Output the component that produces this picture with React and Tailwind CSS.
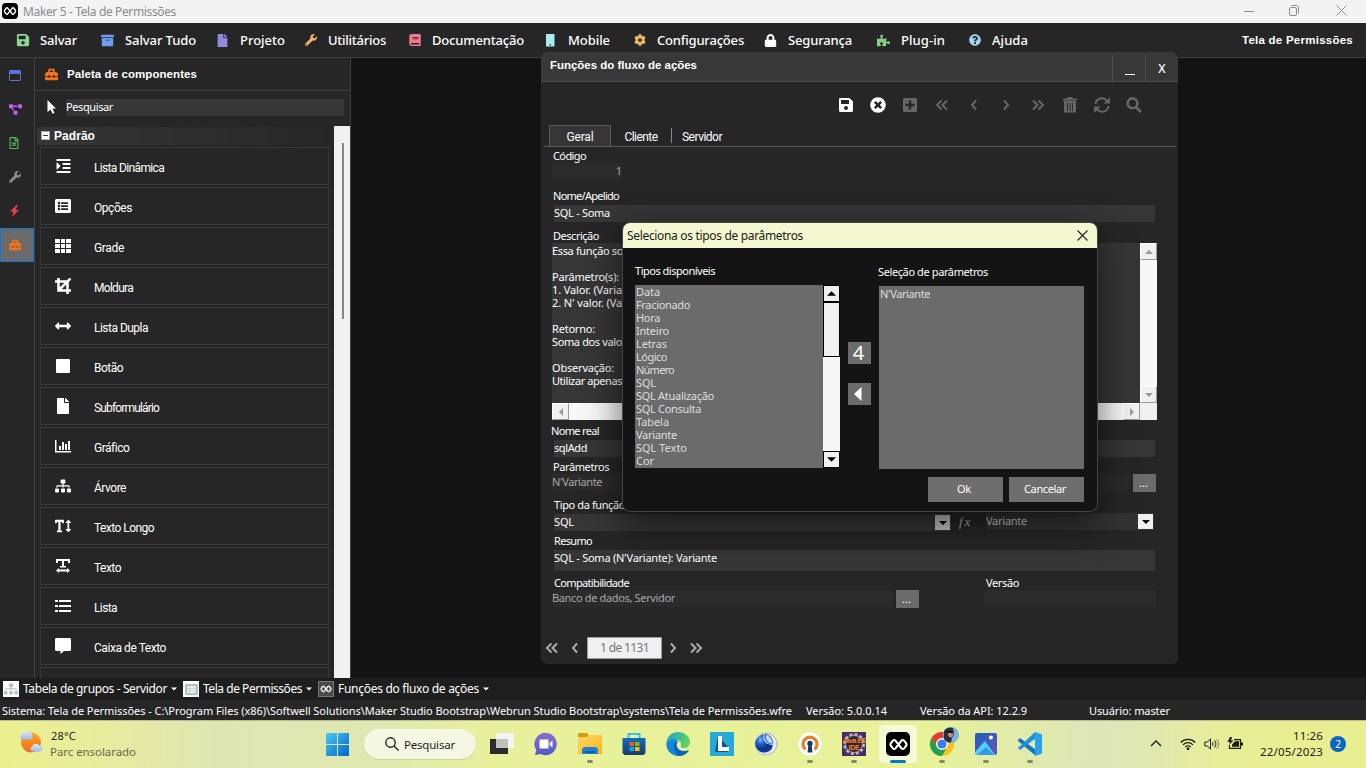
import React, { useLayoutEffect, useRef } from "react";
import {
  FaSave, FaArchive, FaFile, FaWrench, FaBook, FaCog, FaLock, FaPuzzlePiece,
  FaQuestionCircle, FaRegFileAlt, FaBolt, FaToolbox, FaProjectDiagram, FaIndent,
  FaListAlt, FaArrowsAltH, FaSitemap, FaTextHeight,
  FaTimesCircle, FaPlusSquare,
} from "react-icons/fa";

const UI = "font-['Noto_Sans','Open_Sans',sans-serif]";
const SANS = "font-['Liberation_Sans',Arial,sans-serif]";
const THIN = "font-['Roboto','Liberation_Sans',sans-serif]";

/* A single line of text whose tracking is adjusted so that it takes w pixels. */
function T({ w, className = "", children }) {
  const ref = useRef(null);
  useLayoutEffect(() => {
    const el = ref.current;
    if (!w || !el) return;
    el.style.letterSpacing = "0px";
    const natural = el.getBoundingClientRect().width;
    el.style.letterSpacing = (w - natural) / el.textContent.length + "px";
  }, [w, children]);
  return (
    <span ref={ref} className={"inline-block shrink-0 whitespace-pre " + className}>
      {children}
    </span>
  );
}

function Infinity2({ className }) {
  return (
    <svg viewBox="0 0 24 24" className={className} fill="none" stroke="#fff" strokeWidth="2.200" strokeLinejoin="round">
      <path d="M12 12 8.800 8Q7.500 6.500 6.200 8L4 10.700Q3 12 4 13.300L6.200 16Q7.500 17.500 8.800 16L15.200 8Q16.500 6.500 17.800 8L20 10.700Q21 12 20 13.300L17.800 16Q16.500 17.500 15.200 16Z" />
    </svg>
  );
}

function PhoneIcon() {
  return (
    <svg viewBox="0 0 9 13" className="ml-[2px] h-[13px] w-[9px]">
      <path fill="#a8ecec" d="M0 0h8.500v12.500H0z" />
      <path fill="#256" d="M3.500 10h1.500v1.500H3.500z" />
    </svg>
  );
}

const menu = [
  { label: "Salvar", w: 37, box: "w-[85px]", icon: <FaSave className="size-[14px] text-[#8fd694]" /> },
  { label: "Salvar Tudo", w: 71, box: "w-[115px]", icon: <FaArchive className="size-[13px] text-[#6d9ef0]" /> },
  { label: "Projeto", w: 45, box: "w-[88px]", icon: <FaFile className="size-[13px] text-[#8f8ae0]" /> },
  { label: "Utilitários", w: 58, box: "w-[104px]", icon: <FaWrench className="ml-[1px] size-[12px] text-[#f2b568]" /> },
  { label: "Documentação", w: 92, box: "w-[136px]", icon: <FaBook className="ml-[1px] h-[12px] w-[12px] scale-x-110 text-[#f27a8a]" /> },
  { label: "Mobile", w: 42, box: "w-[89px]", icon: <PhoneIcon /> },
  { label: "Configurações", w: 87, box: "w-[131px]", icon: <FaCog className="ml-[1px] size-[12px] text-[#f0b860]" /> },
  { label: "Segurança", w: 64, box: "w-[113px]", icon: <FaLock className="size-[13px] text-white" /> },
  { label: "Plug-in", w: 44, box: "w-[91px]", icon: <FaPuzzlePiece className="size-[13px] text-[#86cf86]" /> },
  { label: "Ajuda", w: 36, box: "w-[80px]", icon: <FaQuestionCircle className="ml-[1px] size-[12px] text-[#a5d5f5]" /> },
];

function GridIcon() {
  return (
    <svg viewBox="0 0 16 14" className="h-[14px] w-4" fill="#fff">
      <path d="M0 0h5v4H0zM6 0h4v4H6zM11 0h5v4h-5zM0 5h5v4H0zM6 5h4v4H6zM11 5h5v4h-5zM0 10h5v4H0zM6 10h4v4H6zM11 10h5v4h-5z" />
    </svg>
  );
}
function ListIcon() {
  return (
    <svg viewBox="0 0 16 12" className="h-3 w-4" fill="#fff">
      <path d="M0 0h3v2H0zM4 0h12v2H4zM0 5h3v2H0zM4 5h12v2H4zM0 10h3v2H0zM4 10h12v2H4z" />
    </svg>
  );
}
function TextWidthIcon() {
  return (
    <svg viewBox="0 0 14 14" className="size-[14px]" fill="#fff">
      <path d="M0 0h14v4h-2V2H8v5h2v1.500H4V7h2V2H2v2H0zM0 11.500 3 9v1.500h8V9l3 2.500-3 2.500v-1.500H3V14z" />
    </svg>
  );
}
function CropIcon() {
  return (
    <svg viewBox="0 0 16 16" className="size-4" fill="none" stroke="#fff" strokeWidth="2.600">
      <path d="M3.500 0v12.500H16M0 3.500h12.500V16M5 11 15.500.5" />
    </svg>
  );
}
function ChartIcon() {
  return (
    <svg viewBox="0 0 16 13" className="h-[13px] w-4" fill="#fff">
      <path d="M0 0h1.500v11H16v1.500H0zM4 6h2v4H4zM7 2h2v8H7zM10 4h2v6h-2zM13 1h2v9h-2z" />
    </svg>
  );
}
function MessageIcon() {
  return (
    <svg viewBox="0 0 16 16" className="size-4" fill="#fff">
      <path d="M1 0h14l1 1v11l-1 1H9l-3.500 3V13H1l-1-1V1z" />
    </svg>
  );
}

const palette = [
  ["Lista Dinâmica", 70, <FaIndent className="h-4 w-[15px]" />],
  ["Opções", 38, <FaListAlt className="size-4" />],
  ["Grade", 30, <GridIcon />],
  ["Moldura", 39, <CropIcon />],
  ["Lista Dupla", 54, <FaArrowsAltH className="size-4" />],
  ["Botão", 29, <span className="size-[14px] rounded-[1px] bg-white" />],
  ["Subformulário", 65, <FaFile className="size-4" />],
  ["Gráfico", 35, <ChartIcon />],
  ["Árvore", 32, <FaSitemap className="size-4" />],
  ["Texto Longo", 60, <FaTextHeight className="size-4" />],
  ["Texto", 27, <TextWidthIcon />],
  ["Lista", 23, <ListIcon />],
  ["Caixa de Texto", 72, <MessageIcon />],
];

function Toolbox({ className }) {
  return <FaToolbox className={"text-[#f97316] " + className} />;
}

function Sidebar() {
  return (
    <div className="flex w-[35px] shrink-0 flex-col border-r border-[#404040]">
      <div className="flex h-[34px] items-center justify-center pt-[1px] pr-1">
        <svg viewBox="0 0 12 11" className="h-[11px] w-3"><path fill="#5873d8" fillRule="evenodd" d="M1 0h10l1 1v9l-1 1H1l-1-1V1zm0 4v6h10V4z" /></svg>
      </div>
      <div className="flex h-[34px] items-center justify-center pr-1"><FaProjectDiagram className="size-[13px] text-[#c85cf5]" /></div>
      <div className="flex h-[34px] items-center justify-center pr-[6px]"><FaRegFileAlt className="size-[12px] text-[#5cb85c]" /></div>
      <div className="flex h-[34px] items-center justify-center pr-1"><FaWrench className="size-[12px] text-[#8c8c8c]" /></div>
      <div className="flex h-[34px] items-center justify-center pr-[6px]">
        <svg viewBox="0 0 9 12" className="h-3 w-[9px]" fill="#ef3e46"><path d="M6.500 0 0 6.500h3.500L2 12l7-7H5.500L8 0z" /></svg>
      </div>
      <div className="flex h-[34px] w-[34px] items-center justify-center border border-[#0a78d6] bg-[#6b6b6b] pr-1">
        <Toolbox className="size-[12px]" />
      </div>
    </div>
  );
}

function Palette() {
  return (
    <div className="flex w-[316px] shrink-0 flex-col border-r border-[#404040]">
      <div className="flex h-[33px] items-center border-b border-[#404040] pl-[10px]">
        <Toolbox className="size-[13px]" />
        <T w={130} className={SANS + " ml-[9px] text-[11.500px] leading-4 font-bold text-white"}>Paleta de componentes</T>
      </div>
      <div className="flex h-[35px] items-start pt-2 pl-[12px]">
        <svg viewBox="0 0 9 14" className="mt-[1px] h-[14px] w-[9px]"><path fill="#fff" d="M.5 0 9 8.500H5.500L7.500 13l-2 .8L3.700 9.500.5 12z" /></svg>
        <div className="ml-[10px] h-[17px] w-[278px] bg-[#363636] text-[11px]">
          <T w={47} className={UI + " leading-4 text-white"}>Pesquisar</T>
        </div>
      </div>
      <div className="flex h-[552px] overflow-hidden">
        <div className="flex w-[299px] shrink-0 flex-col">
          <div className="mt-[1px] ml-[2px] flex h-[18px] shrink-0 items-center rounded-[3px] bg-linear-to-r from-[#363636] to-[#262626] pl-[4px]">
            <span className="mb-[1px] flex size-[9px] items-center justify-center border border-[#aaa] bg-white"><i className="h-px w-[5px] bg-[#2b3f6b]" /></span>
            <T w={41} className={SANS + " ml-[4px] text-[12px] leading-[18px] font-bold text-white"}>Padrão</T>
          </div>
          <div className="mt-[2px] flex flex-col gap-[2px] pl-[5px]">
            {palette.map(([label, w, icon]) => (
              <div key={label} className="flex h-[38px] w-[289px] shrink-0 items-center border border-[#383838] pl-[14px] text-white">
                <span className="flex w-4 items-center justify-center">{icon}</span>
                <T w={w} className={THIN + " mt-[3px] ml-[23px] text-[12px] leading-4"}>{label}</T>
              </div>
            ))}
            <div className="h-[38px] w-[289px] shrink-0 border border-[#383838]" />
          </div>
        </div>
        <div className="flex w-4 justify-center bg-[#f0f0f0] pt-[17px] pl-[2px]">
          <div className="h-[176px] w-[2px] bg-[#858585]" />
        </div>
      </div>
    </div>
  );
}

function Chev({ dir, double, className = "" }) {
  return (
    <svg viewBox="0 0 14 12" className={"h-3 w-[14px] " + className} fill="none" stroke="currentColor" strokeWidth="2">
      <g transform={dir === "r" ? "translate(14 0) scale(-1 1)" : undefined}>
        {double ? <path d="M6.500 1.500 2 6l4.500 4.500M12 1.500 7.500 6l4.500 4.500" /> : <path d="M9 1.500 5 6l4 4.500" />}
      </g>
    </svg>
  );
}

const toolbar = [
  <FaSave className="h-4 w-[16px] text-white" />,
  <FaTimesCircle className="size-[16px] text-white" />,
  <FaPlusSquare className="size-4" />,
  <Chev double />,
  <Chev />,
  <Chev dir="r" />,
  <Chev dir="r" double />,
  <svg viewBox="0 0 14 16" className="h-4 w-[14px]" fill="none" stroke="currentColor">
    <path d="M0 2.500h14M4.500 1h5" strokeWidth="2" />
    <path d="M1 4h12v11.500H1z" fill="currentColor" stroke="none" />
    <path d="M4.500 6v8M7 6v8M9.500 6v8" stroke="#2b2b2b" />
  </svg>,
  <svg viewBox="0 0 16 16" className="size-4" fill="none" stroke="currentColor" strokeWidth="2">
    <path d="M1.500 7a6.300 6.300 0 0 1 11.500-3M14.500 9A6.300 6.300 0 0 1 3 12" />
    <path d="M16 0v6.500H9.500zM0 16V9.500h6.500z" fill="currentColor" stroke="none" />
  </svg>,
  <svg viewBox="0 0 16 16" className="mr-[1px] size-4" fill="none" stroke="currentColor">
    <circle cx="6.500" cy="6.300" r="4.900" strokeWidth="2.600" /><path d="m10 10 5 5" strokeWidth="3" />
  </svg>,
];

function Label({ w, className, children }) {
  return <T w={w} className={"text-white " + className}>{children}</T>;
}

function Tri({ dir = "down", className }) {
  const d = { down: "M0 2h8L4 6z", up: "M0 6h8L4 2z", left: "M6 0v8L2 4z", right: "M2 0v8l4-4z" }[dir];
  return <svg viewBox="0 0 8 8" className={className} fill="currentColor"><path d={d} /></svg>;
}

function ScrollButton({ dir }) {
  return (
    <span className="flex size-[17px] shrink-0 items-center justify-center border border-[#fff] border-r-[#9a9a9a] border-b-[#9a9a9a] bg-[#f0f0f0] text-[#9a9a9a]">
      <Tri dir={dir} className="size-[8px]" />
    </span>
  );
}

const description = [
  ["Essa função so", 71], ["", 0], ["Parâmetro(s):", 67], ["1. Valor. (Varia", 70], ["2. N' valor. (Va", 70],
  ["", 0], ["Retorno:", 43], ["Soma dos valo", 70], ["", 0], ["Observação:", 62], ["Utilizar apenas", 70],
];

function FunctionsWindow() {
  return (
    <div className={UI + " absolute top-[52px] left-[541px] flex h-[612px] w-[637px] flex-col overflow-hidden rounded-[6px] bg-[#262626] text-[11px]"}>
      <div className="flex h-[30px] shrink-0 border-b border-[#4d4d4d] bg-[#383838]">
        <div className="flex-1 pt-[5px] pl-[9px]">
          <T w={147} className={SANS + " text-[11.500px] leading-4 font-bold text-white"}>Funções do fluxo de ações</T>
        </div>
        <div className="mt-[3px] flex w-[33px] justify-center border-l border-[#4d4d4d] pl-[2px]"><span className="mt-[19px] h-px w-[10px] bg-white" /></div>
        <div className="mt-[3px] w-[33px] border-l border-[#4d4d4d] pt-[6px] text-center text-[12px] leading-4 font-medium text-white">X</div>
      </div>
      <div className="flex h-[43px] shrink-0 items-center pt-[3px] pl-[289px] text-[#666]">
        {toolbar.map((icon, i) => <span key={i} className="flex w-8 items-center justify-center">{icon}</span>)}
      </div>
      <div className={THIN + " mr-[2px] ml-[3px] flex h-[22px] shrink-0 border-b border-[#5a5a5a] pl-[5px] text-[12px] text-white"}>
        <div className="flex w-[62px] justify-center border border-b-0 border-[#5a5a5a] bg-[#363636]"><T w={27} className="leading-[23px]">Geral</T></div>
        <div className="my-[3px] flex w-[61px] justify-center border-r border-[#8a8a8a]"><T w={33} className="mt-[-2px] leading-[23px]">Cliente</T></div>
        <T w={40} className="ml-[10px] leading-[25px]">Servidor</T>
      </div>

      <div className="flex flex-col items-start pl-[11px]">
        <Label w={33} className="ml-[1px] h-[16px] leading-[18px]">Código</Label>
        <div className="h-[17px] w-[70px] bg-[#2b2b2b] text-right leading-[16px] text-[#a8a8a8]">1</div>

        <Label w={66} className="mt-[8px] ml-[1px] h-[17px] leading-[16px]">Nome/Apelido</Label>
        <div className="ml-[2px] h-[17px] w-[601px] bg-[#363636]"><T w={56} className="leading-[16px] text-white">SQL - Soma</T></div>

        <Label w={46} className="mt-[5px] ml-[1px] h-[16px] leading-[18px]">Descrição</Label>
        <div className="flex">
          <div className="flex h-[160px] w-[588px] flex-col items-start overflow-hidden bg-[#363636] pt-[1px] text-white">
            {description.map(([line, w], i) => <div key={i} className="flex h-[13px] shrink-0"><T w={w} className="leading-[13px]">{line}</T></div>)}
          </div>
          <div className="flex w-[17px] flex-col justify-between bg-[#f7f7f7]"><ScrollButton dir="up" /><ScrollButton dir="down" /></div>
        </div>
        <div className="flex h-[17px] w-[605px] bg-[#f0f0f0]">
          <div className="flex w-[588px] justify-between bg-[#f7f7f7]"><ScrollButton dir="left" /><ScrollButton dir="right" /></div>
        </div>

        <Label w={48} className="mt-[3px] ml-[-1px] h-[17px] leading-[16px]">Nome real</Label>
        <div className="ml-[2px] h-[17px] w-[601px] bg-[#363636]"><T w={33} className="leading-[16px] text-white">sqlAdd</T></div>

        <Label w={56} className="ml-[1px] h-[17px] leading-[20px]">Parâmetros</Label>
        <div className="flex h-[18px]">
          <div className="h-[17px] w-[577px] bg-[#2b2b2b]"><T w={50} className="leading-[16px] text-[#a8a8a8]">N'Variante</T></div>
          <div className="ml-[4px] h-[18px] w-[23px] bg-[#6b6b6b] pr-[2px] text-center leading-[17px] text-white">...</div>
        </div>

        <Label w={71} className="ml-[2px] h-[21px] leading-[26px]">Tipo da função</Label>
        <div className="flex h-[18px]">
          <div className="mt-[1px] ml-[2px] flex h-[17px] w-[397px] justify-between bg-[#363636]">
            <T w={20} className="leading-[16px] text-white">SQL</T>
            <span className="mt-[1px] mr-[1px] flex h-[15px] w-[15px] items-center justify-center bg-[#c4c4c4] text-black"><Tri className="size-[8px]" /></span>
          </div>
          <span className="ml-[8px] flex w-[14px] font-['Liberation_Serif',serif] text-[13px] leading-[17px] text-[#aaa] italic"><T w={13}>fx</T></span>
          <div className="ml-[13px] flex h-[17px] w-[168px] justify-between bg-[#333]">
            <T w={41} className="leading-[16px] text-[#c8c8c8]">Variante</T>
            <span className="mt-[1px] mr-[1px] flex h-[15px] w-[15px] items-center justify-center bg-[#f0f0f0] text-black"><Tri className="size-[8px]" /></span>
          </div>
        </div>

        <Label w={38} className="ml-[2px] h-[19px] leading-[20px]">Resumo</Label>
        <div className="ml-[2px] h-[21px] w-[601px] bg-[#363636]"><T w={163} className="leading-[16px] text-white">SQL - Soma (N'Variante): Variante</T></div>

        <div className="flex h-[19px]">
          <Label w={75} className="ml-[2px] leading-[24px]">Compatibilidade</Label>
          <Label w={33} className="ml-[357px] leading-[24px]">Versão</Label>
        </div>
        <div className="flex h-[18px]">
          <div className="h-[17px] w-[341px] bg-[#2b2b2b]"><T w={123} className="leading-[16px] text-[#a8a8a8]">Banco de dados, Servidor</T></div>
          <div className="ml-[3px] h-[18px] w-[23px] bg-[#6b6b6b] pr-[2px] text-center leading-[17px] text-white">...</div>
          <div className="ml-[65px] h-[17px] w-[172px] bg-[#2b2b2b]" />
        </div>
      </div>

      <div className="mt-[29px] flex h-[22px] items-center pl-1 text-[#aaa]">
        <Chev double />
        <Chev className="ml-[9px]" />
        <div className="ml-[5px] flex h-[22px] w-[75px] justify-center border border-[#9a9a9a] bg-[#f0f0f0]"><T w={49} className="text-[12px] leading-[20px] text-[#777]">1 de 1131</T></div>
        <Chev dir="r" className="ml-[4px]" />
        <Chev dir="r" double className="ml-[9px]" />
      </div>
    </div>
  );
}

const types = [
  ["Data", 24], ["Fracionado", 54], ["Hora", 24], ["Inteiro", 33], ["Letras", 31], ["Lógico", 31], ["Número", 38], ["SQL", 20],
  ["SQL Atualização", 78], ["SQL Consulta", 65], ["Tabela", 33], ["Variante", 41], ["SQL Texto", 51], ["Cor", 18],
];

function ParamDialog() {
  return (
    <div className={UI + " absolute top-[222px] left-[622px] flex h-[290px] w-[476px] flex-col overflow-hidden rounded-[8px] border border-[#444] bg-[#141414] text-[11px] text-white shadow-[0_12px_36px_rgba(0,0,0,0.6)]"}>
      <div className="flex h-[25px] shrink-0 items-center justify-between bg-[#f3f8d0] pr-[9px] pl-[4px]">
        <T w={176} className="text-[12px] leading-[26px] text-[#1b1b1b]">Seleciona os tipos de parâmetros</T>
        <svg viewBox="0 0 11 11" className="size-[11px]" stroke="#222" strokeWidth="1.100"><path d="M.5.500 10.500 10.500M10.500.5.500 10.500" /></svg>
      </div>
      <div className="flex pl-[12px]">
        <div className="w-[205px]">
          <Label w={80} className="h-[37px] pt-[15px] leading-[16px]">Tipos disponíveis</Label>
          <div className="flex h-[183px]">
            <div className="flex w-[188px] flex-col items-start overflow-hidden bg-[#6b6b6b] pl-[1px] text-[#dedede]">
              {types.map(([t, w]) => <div key={t} className="flex h-[13px] shrink-0"><T w={w} className="leading-[13px]">{t}</T></div>)}
            </div>
            <div className="flex w-[17px] flex-col bg-[#f7f7f7] text-black">
              <span className="flex h-[17px] items-center justify-center border border-black bg-[#f0f0f0]"><Tri dir="up" className="size-[9px]" /></span>
              <span className="h-[55px] border border-black bg-[#f0f0f0]" />
              <span className="mt-auto flex h-[17px] items-center justify-center border border-black bg-[#f0f0f0]"><Tri className="size-[9px]" /></span>
            </div>
          </div>
        </div>
        <div className="ml-[8px] flex w-[23px] flex-col pt-[94px]">
          <span className="flex h-[22px] items-center justify-center bg-[#6b6b6b] pr-[2px] text-[20px] leading-none">4</span>
          <span className="mt-[19px] flex h-[22px] items-center justify-center bg-[#6b6b6b] pr-[3px]">
            <svg viewBox="0 0 8 14" className="h-[14px] w-[8px]" fill="#fff"><path d="M7.500 0v14L0 7z" /></svg>
          </span>
        </div>
        <div className="ml-[8px] w-[205px]">
          <Label w={110} className="ml-[-1px] h-[38px] pt-[16px] leading-[16px]">Seleção de parâmetros</Label>
          <div className="h-[183px] bg-[#6b6b6b] pl-[1px] text-[#dedede]"><T w={50} className="leading-[14px]">N'Variante</T></div>
        </div>
      </div>
      <div className="mt-[8px] flex justify-end gap-[6px] pr-[13px]">
        <div className="flex h-[25px] w-[75px] justify-center bg-[#6e6e6e] pr-[3px]"><T w={14} className="leading-[24px]">Ok</T></div>
        <div className="flex h-[25px] w-[75px] justify-center bg-[#6e6e6e] pr-[3px]"><T w={42} className="leading-[24px]">Cancelar</T></div>
      </div>
    </div>
  );
}

function Slot({ children, mark }) {
  return (
    <div className="flex w-11 flex-col items-center">
      <div className={"flex h-[38px] w-[38px] items-center justify-center rounded-[4px] " + (mark === "active" ? "bg-white/60" : "")}>{children}</div>
      {mark && <i className={mark === "active" ? "mt-[-3px] h-[3px] w-4 rounded-full bg-[#0078d4]" : "mt-[-3px] h-[3px] w-[6px] rounded-full bg-[#85896a]"} />}
    </div>
  );
}

function Taskbar() {
  return (
    <div className={UI + " flex h-12 shrink-0 bg-[linear-gradient(90deg,#ebf08e_0%,#e6ec9e_8%,#dde5b4_16%,#dfe8b0_28%,#e7f19b_36%,#e7f299_68%,#dde5b8_80%,#dfe7b2_84%,#e8ee96_90%,#e9ee90_100%)] shadow-[inset_0_1px_0_#b9bd8e]"}>
      <div className="flex w-[326px] pt-2 pl-[19px]">
        <svg viewBox="0 0 24 24" className="mt-[2px] size-6">
          <defs><linearGradient id="sun" x2="0" y2="1"><stop stopColor="#f9a825" /><stop offset="1" stopColor="#f26a1b" /></linearGradient>
          <linearGradient id="cloud" x2="0" y2="1"><stop stopColor="#dcebfb" /><stop offset="1" stopColor="#9db9e6" /></linearGradient></defs>
          <circle cx="12" cy="12.500" r="10" fill="url(#sun)" />
          <path fill="url(#cloud)" d="M3 9.500a3 3 0 0 1 0-5.500 4 4 0 0 1 7-1 2.500 2.500 0 0 1 3 3.500 2 2 0 0 1-1 3z" />
          <path fill="url(#cloud)" d="M13 21.500a3 3 0 0 1 0-5 4 4 0 0 1 7-1 3 3 0 0 1 3.500 3.500 2.500 2.500 0 0 1-2 2.500z" />
        </svg>
        <div className="ml-[8px] flex flex-col items-start">
          <T w={25} className="text-[11px] leading-4 text-[#1d1d12]">28°C</T>
          <T w={86} className="ml-[-1px] text-[11.500px] leading-4 text-[#66684e]">Parc ensolarado</T>
        </div>
      </div>
      <svg viewBox="0 0 23 23" className="mt-[13px] size-[23px]">
        <defs><linearGradient id="win" x2="1" y2="1"><stop stopColor="#4cc7f5" /><stop offset="1" stopColor="#0067c8" /></linearGradient></defs>
        <path fill="url(#win)" d="M0 0h11v11H0zM12 0h11v11H12zM0 12h11v11H0zM12 12h11v11H12z" />
      </svg>
      <div className="mt-[9px] ml-[15px] flex h-[30px] w-[112px] items-center rounded-full bg-[#f4f7e1] pl-[21px] shadow-[0_1px_1px_#c9cfa0]">
        <svg viewBox="0 0 14 14" className="size-[14px]" fill="none" stroke="#222" strokeWidth="1.400"><circle cx="5.500" cy="5.500" r="4.700" /><path d="m9 9 4.500 4.500" /></svg>
        <T w={51} className="mt-[2px] ml-[5px] text-[11.500px] leading-4 text-[#1d1d1d]">Pesquisar</T>
      </div>
      <div className="ml-[4px] flex pt-[5px]">
        <Slot><svg viewBox="0 0 24 24" className="size-6"><path fill="#2b2b2b" d="M0 7h18v15H0z" /><path fill="#f4f4f4" d="M6 1h18v15H6z" /><path fill="#c0c0bc" d="M6 7h12v9H6z" /></svg></Slot>
        <Slot>
          <svg viewBox="0 0 24 24" className="size-6">
            <defs><linearGradient id="chat" x2="0" y2="1"><stop stopColor="#8b6fc8" /><stop offset="1" stopColor="#5059c9" /></linearGradient></defs>
            <path fill="url(#chat)" d="M12 .8A11.200 11.200 0 1 1 6.500 22L1 23l1.200-5A11.200 11.200 0 0 1 12 .8z" />
            <path fill="#fff" d="M6.500 7.500h8v9h-8a1 1 0 0 1-1-1v-7a1 1 0 0 1 1-1zM15.500 11l3-2.500v7l-3-2.500z" />
          </svg>
        </Slot>
        <Slot mark="run">
          <svg viewBox="0 0 24 24" className="size-6">
            <defs><linearGradient id="fold" x2="1" y2="1"><stop stopColor="#ffd768" /><stop offset="1" stopColor="#fbb616" /></linearGradient></defs>
            <path fill="#d99a0e" d="M1 1h8l2 3v4H0V2z" /><path fill="url(#fold)" d="M0 5h9l2-2h13v19H0z" />
            <path fill="#1a82d6" d="M6 15h12l2 2v5H4v-5z" /><path fill="#0b5ea8" d="M7 19h10v2H7z" />
          </svg>
        </Slot>
        <Slot>
          <svg viewBox="0 0 24 24" className="size-6">
            <defs><linearGradient id="store" x2="0" y2="1"><stop stopColor="#0f6fc0" /><stop offset="1" stopColor="#1b3b66" /></linearGradient></defs>
            <path fill="none" stroke="#39bff0" strokeWidth="2" d="M6.500 7V2h11v5" /><path fill="url(#store)" d="M.5 6h23v15l-2 2h-19l-2-2z" />
            <path fill="#f35325" d="M7.500 10H12v4H7.500z" /><path fill="#81bc06" d="M13 10h4.500v4H13z" /><path fill="#05a6f0" d="M7.500 15H12v4H7.500z" /><path fill="#ffba08" d="M13 15h4.500v4H13z" />
          </svg>
        </Slot>
        <Slot>
          <svg viewBox="0 0 24 24" className="size-6">
            <defs><linearGradient id="edge" x2="1" y2=".3"><stop stopColor="#1b9fe0" /><stop offset="1" stopColor="#5ed35a" /></linearGradient></defs>
            <path fill="#0c63b8" d="M.5 11C1 19 6 24 13 24c4 0 8-2 10-6-5 2-10 1-12-3-1-3 0-5 2-6z" />
            <path fill="#1488d8" d="M.5 12C1 6 8 4 12 8c-5 2-6 10 0 15.500C5 23.500 0 18 .5 12z" />
            <path fill="url(#edge)" d="M.5 11C1 4 6 0 12 0c7 0 12 5 12 10 0 4-3 6-6 6s-4-1-3-3c1-5-8-9-14.500-2z" />
          </svg>
        </Slot>
        <Slot><svg viewBox="0 0 24 24" className="size-6"><path fill="#25a9d8" d="M0 0h24v24H0z" /><path fill="#14567a" d="m8 4-3 16h13l1-4z" /><path fill="#fff" d="M8 4h4v11h7v4H8z" /></svg></Slot>
        <Slot>
          <svg viewBox="0 0 24 24" className="size-6">
            <defs><radialGradient id="ball" cx=".3" cy=".3"><stop stopColor="#7db0f2" /><stop offset=".5" stopColor="#1d5fcc" /><stop offset="1" stopColor="#0a3590" /></radialGradient></defs>
            <circle cx="12" cy="12" r="11" fill="#e3e8ef" stroke="#b4b8c0" /><path fill="url(#ball)" d="M10 2C3 4 .5 9 1.500 13.500S7 21 11 20.500s8-3.500 7.500-7.500C12 13 8 8 10 2z" /><path fill="#2b6bd0" d="M11 1.500c-2 6 2 11 7.500 11C20 8 17 3 11 1.500z" /><path fill="#fff" d="M12 3c-.5 5 2 8 6 8.500C18.500 8 16 4 12 3z" opacity=".75" />
          </svg>
        </Slot>
        <Slot mark="run"><svg viewBox="0 0 24 24" className="size-6"><circle cx="12" cy="12" r="11.500" fill="#fff" /><path fill="none" stroke="#ea7e24" strokeWidth="3.200" d="M7.500 17.500a7 7 0 1 1 9 0" /><circle cx="12" cy="11.500" r="2.700" fill="#1a3a66" /><path fill="#1a3a66" d="M10.500 12h3l1 8.500h-5z" /></svg></Slot>
        <Slot mark="run">
          <span className="relative flex size-6 items-center justify-center bg-[#4a2a6a]">
            <svg viewBox="0 0 24 24" className="size-6" fill="none"><circle cx="12" cy="12" r="9.500" stroke="#b8b8b8" strokeWidth="3" strokeDasharray="3 2" /><circle cx="12" cy="12" r="8.500" fill="#31203f" stroke="#aaa" /></svg>
            <span className={SANS + " absolute inset-0 flex flex-col items-center justify-center text-[7px] leading-[7px] font-bold whitespace-nowrap text-[#f48a1c]"}><T w={23}>Java EE</T><T w={11}>IDE</T></span>
          </span>
        </Slot>
        <Slot mark="active"><span className="flex size-6 items-center justify-center rounded-[5px] bg-black"><Infinity2 className="size-[23px]" /></span></Slot>
        <Slot mark="run">
          <span className="relative size-6">
            <svg viewBox="0 0 24 24" className="size-6">
              <circle cx="12" cy="12" r="12" fill="#fbc116" /><path fill="#e33b2e" d="M1.600 6A12 12 0 0 1 22.400 6H12L7 15z" /><path fill="#1fa152" d="M1.600 6a12 12 0 0 0 10.400 18l5-9-10 0z" />
              <circle cx="12" cy="12" r="6" fill="#fff" /><circle cx="12" cy="12" r="4.600" fill="#3b7ded" />
            </svg>
            <svg viewBox="0 0 16 16" className="absolute -top-[5px] left-[13px] size-4"><circle cx="8" cy="8" r="8" fill="#7db3dd" /><path fill="#26313d" d="M1 4a8 8 0 0 1 9-3l1 6-2 4-1 4.500A8 8 0 0 1 1 12z" /><path fill="#b98c7a" d="M5 4h5v4l-2 3-3-2z" /><path fill="#161616" d="M4 4h6v2H4z" /></svg>
          </span>
        </Slot>
        <Slot mark="run"><svg viewBox="0 0 24 24" className="size-6"><defs><linearGradient id="ph" x2="1" y2="1"><stop stopColor="#1a5fc0" /><stop offset="1" stopColor="#6a55b8" /></linearGradient></defs><rect x="1" y="1" width="22" height="22" rx="2" fill="url(#ph)" /><path fill="#52d0f5" d="m1 20 10-11 10 14H3l-2-1z" /><path fill="#2f9be8" d="m3 23 9-8 8 8z" /><circle cx="17" cy="5.500" r="2" fill="#fff" /></svg></Slot>
        <Slot mark="run"><svg viewBox="0 0 24 24" className="size-6"><path fill="#0f76c0" d="m0 8 2-2 16 12v6L0 9z" /><path fill="#2190dc" d="M0 16 17 0l1 6L2 18z" /><path fill="#28a2f2" d="m17 0 7 2.500v19L17 24z" /></svg></Slot>
      </div>
      <div className="ml-[98px] flex text-[#1d1d12]">
        <svg viewBox="0 0 12 7" className="mt-[20px] h-[7px] w-3" fill="none" stroke="currentColor" strokeWidth="1.400"><path d="m1 6 5-5 5 5" /></svg>
        <svg viewBox="0 0 16 12" className="mt-[18px] ml-[18px] h-3 w-4" fill="none" stroke="currentColor" strokeWidth="1.200"><path d="M.8 4.500a10 10 0 0 1 14.400 0M3 6.800a7 7 0 0 1 10 0M5.200 9a4 4 0 0 1 5.600 0" /><circle cx="8" cy="10.700" r=".8" fill="currentColor" /></svg>
        <svg viewBox="0 0 16 12" className="mt-[18px] ml-[8px] h-3 w-4" fill="none" stroke="currentColor"><path d="M.8 4h2.500L6.500 1v10L3.300 8H.8zM8.500 4.200a3 3 0 0 1 0 3.600M10.500 2.500a5 5 0 0 1 0 7" /><path d="M12.600 1a7 7 0 0 1 0 10" opacity=".5" /></svg>
        <svg viewBox="0 0 17 12" className="mt-[17px] ml-[7px] h-3 w-[17px]" fill="none" stroke="currentColor" strokeWidth="1.200">
          <path d="M7 2.600h6.500v8.800h-11V8" /><path d="M8 4.200h4v5.600H5V7.500zM14 5.500h2v3h-2zM3 0 .5 5H3L2 8l4.500-4.500H4L5 0z" fill="currentColor" stroke="none" />
        </svg>
      </div>
      <div className="ml-[15px] flex w-[64px] flex-col items-end pt-[8px] text-[11.500px] text-[#1d1d12]">
        <T w={30} className="leading-4">11:26</T>
        <T w={63} className="leading-4">22/05/2023</T>
      </div>
      <span className="mt-[16px] ml-[7px] flex size-4 shrink-0 items-center justify-center rounded-full bg-[#0b66c2] text-[10px] leading-none text-white">2</span>
    </div>
  );
}

function OpenTab({ icon, label, w }) {
  return (
    <div className="flex items-center">
      <span className="flex size-4 items-center justify-center">{icon}</span>
      <T w={w} className="ml-1 text-[12px] leading-[22px]">{label}</T>
      <Tri className="ml-[4px] size-[6px]" />
    </div>
  );
}

export default function App() {
  return (
    <div className="relative flex h-[768px] w-[1366px] flex-col overflow-hidden bg-[#262626]">
      <div className={UI + " flex h-[23px] shrink-0 items-center bg-[#f3f3f3] pl-[2px] text-[#8c8c8c]"}>
        <span className="mb-[1px] flex size-4 items-center justify-center rounded-[4px] bg-black"><Infinity2 className="size-[16px]" /></span>
        <T w={153} className="ml-[5px] text-[12px] leading-[23px]">Maker 5 - Tela de Permissões</T>
        <svg viewBox="0 0 104 12" className="mr-[18px] mb-[2px] ml-auto h-3 w-[104px]" fill="none" stroke="#8c8c8c">
          <path d="M0 6.500h10M92.500.500l10 10M102.500.5l-10 10" />
          <rect x="45.500" y="2.500" width="7" height="8" rx="1.500" /><path d="M47.500.5h5.500l1.500 1.500v6.500" />
        </svg>
      </div>

      <div className={UI + " flex h-[35px] shrink-0 items-center border-b border-[#404040] pl-4 text-[13px] font-medium text-white"}>
        {menu.map((m) => (
          <div key={m.label} className={"flex shrink-0 items-center " + m.box}>
            <span className="flex w-6 shrink-0">{m.icon}</span>
            <T w={m.w} className="mt-[1px] leading-[33px]">{m.label}</T>
          </div>
        ))}
        <T w={111} className={SANS + " mt-[-1px] ml-auto mr-[13px] text-[11.500px] leading-5 font-bold"}>Tela de Permissões</T>
      </div>

      <div className="flex h-[620px] shrink-0 overflow-hidden">
        <Sidebar />
        <Palette />
        <div className="flex-1 bg-[#131313]" />
      </div>

      <div className={UI + " flex h-[22px] shrink-0 gap-[6px] bg-[#1e1e1e] pl-[3px] text-white"}>
        <OpenTab w={144} label="Tabela de grupos - Servidor" icon={<span className="flex size-4 items-center justify-center bg-white"><FaSitemap className="size-[14px] text-[#b5c2c2]" /></span>} />
        <OpenTab w={99} label="Tela de Permissões" icon={<span className="flex size-4 items-center justify-center bg-white"><FaListAlt className="size-[13px] text-[#b5c2c2]" /></span>} />
        <OpenTab w={141} label="Funções do fluxo de ações" icon={<span className="flex size-4 items-center justify-center border border-[#777] bg-[#4a4a4a]"><Infinity2 className="size-4" /></span>} />
      </div>
      <div className={UI + " flex h-5 shrink-0 pl-[2px] text-[11px] text-white"}>
        <T w={790} className="leading-[21px]">{"Sistema: Tela de Permissões - C:\\Program Files (x86)\\Softwell Solutions\\Maker Studio Bootstrap\\Webrun Studio Bootstrap\\systems\\Tela de Permissões.wfre"}</T>
        <T w={81} className="ml-[14px] leading-[21px]">Versão: 5.0.0.14</T>
        <T w={107} className="ml-[33px] leading-[21px]">Versão da API: 12.2.9</T>
        <T w={81} className="ml-[62px] leading-[21px]">Usuário: master</T>
      </div>
      <Taskbar />

      <FunctionsWindow />
      <ParamDialog />
    </div>
  );
}
